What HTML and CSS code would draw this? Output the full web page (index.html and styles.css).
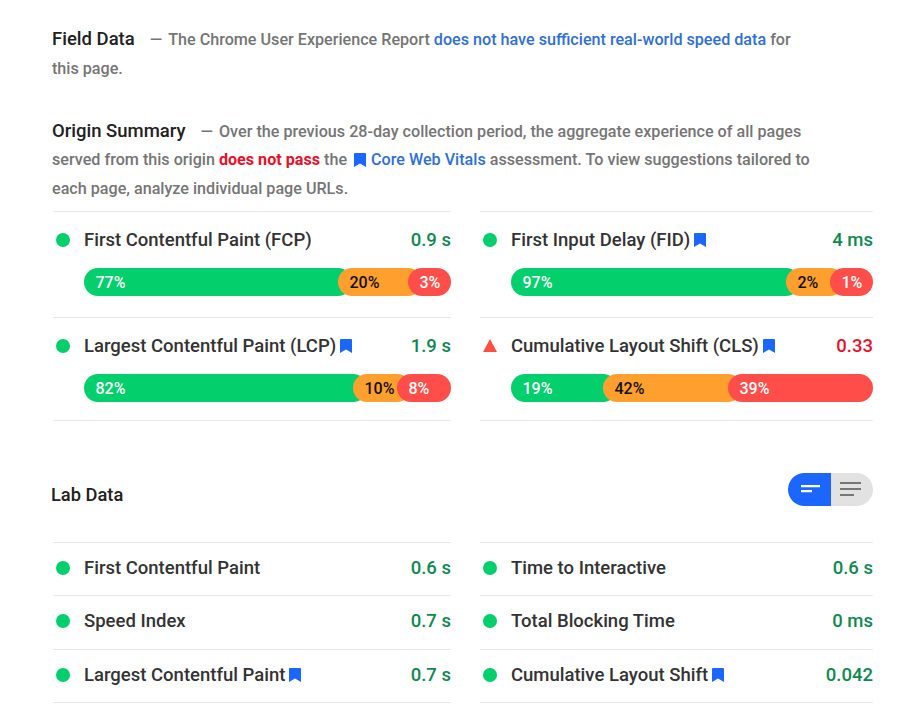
FILE: index.html
```html
<!DOCTYPE html>
<html lang="en">
<head>
<meta charset="utf-8">
<title>PageSpeed report</title>
<link rel="stylesheet" href="styles.css">
</head>
<body>
<svg class="defs" width="0" height="0" aria-hidden="true"><defs><symbol id="bm" viewBox="0 0 12 14"><path d="M1 0h10a1 1 0 0 1 1 1v13L6 10.6 0 14V1a1 1 0 0 1 1-1z"/></symbol></defs></svg>
<main class="page">
  <p class="intro intro-field"><strong class="heading">Field Data</strong><span class="dash">—</span>The Chrome User Experience Report <a class="link">does not have sufficient real-world speed data</a> for this page.</p>
  <p class="intro intro-origin"><strong class="heading">Origin Summary</strong><span class="dash">—</span>Over the previous 28-day collection period, the aggregate experience of all pages served from this origin <b class="fail-text">does not pass</b> the <svg class="bm bm-inline"><use href="#bm"/></svg><a class="link">Core Web Vitals</a> assessment. To view suggestions tailored to each page, analyze individual page URLs.</p>

  <section class="grid">
    <div class="col">
      <div class="metric metric-tall">
        <div class="row"><i class="dot"></i><span class="label">First Contentful Paint (FCP)</span><span class="value">0.9 s</span></div>
        <div class="bar"><span class="seg good" style="flex-basis:268px">77%</span><span class="seg avg" style="flex-basis:84px">20%</span><span class="seg poor" style="flex:1">3%</span></div>
      </div>
      <div class="metric">
        <div class="row"><i class="dot"></i><span class="label">Largest Contentful Paint (LCP)</span><svg class="bm"><use href="#bm"/></svg><span class="value">1.9 s</span></div>
        <div class="bar"><span class="seg good" style="flex-basis:283px">82%</span><span class="seg avg" style="flex-basis:58px">10%</span><span class="seg poor" style="flex:1">8%</span></div>
      </div>
    </div>
    <div class="col">
      <div class="metric metric-tall">
        <div class="row"><i class="dot"></i><span class="label">First Input Delay (FID)</span><svg class="bm"><use href="#bm"/></svg><span class="value">4 ms</span></div>
        <div class="bar"><span class="seg good" style="flex-basis:289px">97%</span><span class="seg avg" style="flex-basis:58px">2%</span><span class="seg poor" style="flex:1">1%</span></div>
      </div>
      <div class="metric">
        <div class="row"><svg class="tri" viewBox="0 0 14 13"><path d="M7 0l7 13H0z"/></svg><span class="label">Cumulative Layout Shift (CLS)</span><svg class="bm"><use href="#bm"/></svg><span class="value value-fail">0.33</span></div>
        <div class="bar"><span class="seg good" style="flex-basis:106px">19%</span><span class="seg avg" style="flex-basis:139px">42%</span><span class="seg poor" style="flex:1">39%</span></div>
      </div>
    </div>
  </section>

  <header class="lab-head">
    <h2 class="lab-title">Lab Data</h2>
    <div class="toggle">
      <span class="tog tog-on"><svg width="20" height="9" viewBox="0 0 20 9"><path d="M0 0h19v2.2H0zM0 5h11v2.2H0z"/></svg></span>
      <span class="tog tog-off"><svg width="21" height="15" viewBox="0 0 21 15"><path d="M0 0h21v2H0zM0 6h21v2H0zM0 12h14v2H0z"/></svg></span>
    </div>
  </header>

  <section class="grid">
    <div class="col">
      <div class="row lab"><i class="dot"></i><span class="label">First Contentful Paint</span><span class="value">0.6 s</span></div>
      <div class="row lab"><i class="dot"></i><span class="label">Speed Index</span><span class="value">0.7 s</span></div>
      <div class="row lab"><i class="dot"></i><span class="label">Largest Contentful Paint</span><svg class="bm"><use href="#bm"/></svg><span class="value">0.7 s</span></div>
    </div>
    <div class="col">
      <div class="row lab"><i class="dot"></i><span class="label">Time to Interactive</span><span class="value">0.6 s</span></div>
      <div class="row lab"><i class="dot"></i><span class="label">Total Blocking Time</span><span class="value">0 ms</span></div>
      <div class="row lab"><i class="dot"></i><span class="label">Cumulative Layout Shift</span><svg class="bm"><use href="#bm"/></svg><span class="value">0.042</span></div>
    </div>
  </section>
</main>
</body>
</html>
```
FILE: styles.css
```css
* { box-sizing: border-box; }
html, body { margin: 0; background: #fff; }
body { font-family: Roboto, "Liberation Sans", sans-serif; color: #333; overflow: hidden; height: 710px; }
.defs { position: absolute; }
.page { padding: 25px 27px 0 52px; }
.intro { margin: 0; font-size: 16.15px; line-height: 28.5px; color: #757575; font-weight: 500; }
.intro-field { width: 750px; }
.intro-origin { width: 765px; margin-top: 33.5px; }
.heading { font-size: 18.5px; font-weight: 500; color: #212121; }
.dash { margin: 0 6px 0 15px; color: #757575; }
.link { color: #2f6fd8; }
.fail-text { color: #eb0f2a; font-weight: 700; }
.bm { width: 12px; height: 14px; fill: #1a66ff; flex: none; margin-left: 4px; }
.bm-inline { display: inline-block; vertical-align: -2px; margin: 0 5px 0 3px; }
.grid { display: grid; grid-template-columns: 398px 393px; column-gap: 29px; margin-left: 1px; }
.intro-origin + .grid { margin-top: 7.5px; }
.col { display: flex; flex-direction: column; border-bottom: 1px solid #e8e8e8; }
.metric { border-top: 1px solid #e8e8e8; padding: 14px 0 18px; }
.metric-tall { padding-bottom: 21px; }
.row { display: flex; align-items: center; height: 28px; padding-left: 3px; font-size: 18.5px; font-weight: 500; }
.dot { width: 14px; height: 14px; border-radius: 50%; background: #04cf6d; flex: none; margin-right: 14px; }
.tri { width: 14px; height: 13px; fill: #ff4e42; flex: none; margin-right: 14px; }
.label { color: #333; }
.value { margin-left: auto; color: #0d8a4f; }
.value-fail { color: #eb0f2a; }
.bar { display: flex; height: 28px; margin: 14px 0 0 31px; font-size: 16px; font-weight: 500; line-height: 29px; }
.seg { border-radius: 14px; padding-left: 11.5px; margin-left: -14px; flex: none; white-space: nowrap; }
.seg:first-child { margin-left: 0; }
.good { background: #04cf6d; color: #fff; }
.avg { background: #ff9f2e; color: #111; position: relative; }
.poor { background: #ff4e4a; color: #fff; position: relative; }
.lab-head { display: flex; align-items: flex-start; justify-content: space-between; height: 121px; padding-top: 52px; }
.lab-title { margin: 11px 0 0 -1px; font-size: 18.3px; line-height: 21px; font-weight: 500; color: #212121; }
.toggle { display: flex; height: 33px; border-radius: 17px; overflow: hidden; }
.tog { display: flex; align-items: center; justify-content: center; }
.tog-on { width: 43px; background: #1a66ff; fill: #fff; padding-left: 3px; }
.tog-off { width: 42px; background: #e2e2e2; fill: #777; padding-right: 3px; }
.row.lab { height: 53.5px; border-top: 1px solid #e8e8e8; padding-bottom: 2px; }
```
